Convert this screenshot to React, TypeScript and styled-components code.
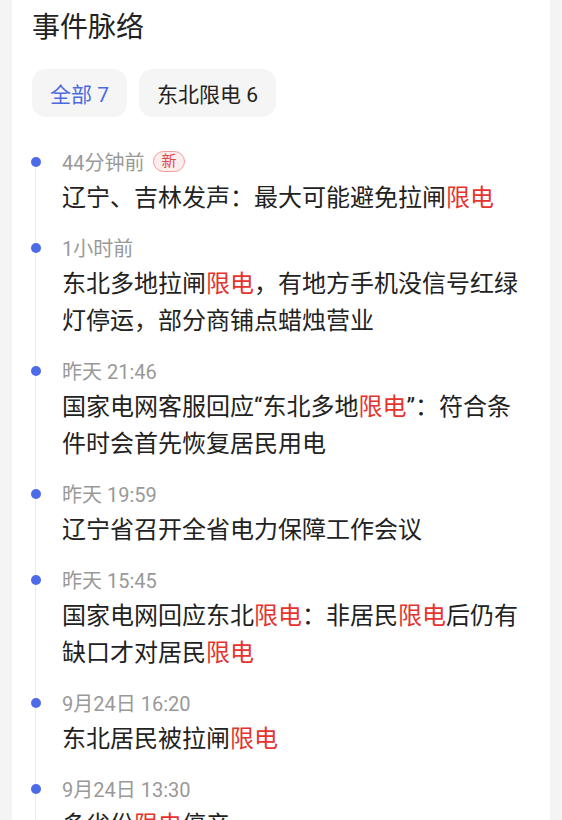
import styled, { createGlobalStyle } from "styled-components";

const GlobalStyle = createGlobalStyle`
  body {
    margin: 0;
    background: #f4f4f4;
    font-family: Roboto, "Noto Sans CJK SC", sans-serif;
  }
`;

const Card = styled.section`
  margin: 0 12px;
  background: #fff;
  padding: 8px 20px 0 20px;
  min-height: 820px;
`;

const Title = styled.h2`
  margin: 0;
  font-size: 28px;
  line-height: 40px;
  font-weight: 400;
  color: #222;
`;

const Tabs = styled.div`
  display: flex;
  gap: 12px;
  margin-top: 21px;
`;

const Tab = styled.button<{ $active?: boolean }>`
  height: 48px;
  padding: 0 18px;
  border: none;
  border-radius: 14px;
  background: #f5f5f5;
  font-family: inherit;
  font-size: 21px;
  color: ${(p) => (p.$active ? "#4d6be0" : "#222")};
`;

const Timeline = styled.ul`
  list-style: none;
  margin: 28px 0 0;
  padding: 0;
`;

const Item = styled.li`
  position: relative;
  padding: 0 0 14px 30px;

  &::before {
    content: "";
    position: absolute;
    left: 3px;
    top: 0;
    bottom: 0;
    width: 1px;
    background: #ececec;
  }

  &:first-child::before {
    top: 16px;
  }
`;

const Dot = styled.span`
  position: absolute;
  left: -1px;
  top: 12px;
  width: 10px;
  height: 10px;
  border-radius: 50%;
  background: #4d6be8;
`;

const Time = styled.div`
  display: flex;
  align-items: center;
  height: 33px;
  margin-bottom: 2px;
  font-size: 20px;
  color: #999;
`;

const NewBadge = styled.span`
  margin-left: 9px;
  height: 19px;
  padding: 0 7px;
  border: 1px solid #f09a9a;
  border-radius: 11px;
  background: #fdeeee;
  color: #e24a4a;
  font-size: 15px;
  line-height: 19px;
`;

const Headline = styled.div`
  font-size: 24px;
  line-height: 37px;
  color: #222;
`;

const Hl = styled.span`
  color: #e5332e;
`;

type Event = { time: string; isNew?: boolean; parts: string[] };

const events: Event[] = [
  { time: "44分钟前", isNew: true, parts: ["辽宁、吉林发声：最大可能避免拉闸", "限电"] },
  { time: "1小时前", parts: ["东北多地拉闸", "限电", "，有地方手机没信号红绿灯停运，部分商铺点蜡烛营业"] },
  { time: "昨天 21:46", parts: ["国家电网客服回应“东北多地", "限电", "”：符合条件时会首先恢复居民用电"] },
  { time: "昨天 19:59", parts: ["辽宁省召开全省电力保障工作会议"] },
  { time: "昨天 15:45", parts: ["国家电网回应东北", "限电", "：非居民", "限电", "后仍有缺口才对居民", "限电"] },
  { time: "9月24日 16:20", parts: ["东北居民被拉闸", "限电"] },
  { time: "9月24日 13:30", parts: ["多省份", "限电", "停产"] },
];

export default function App() {
  return (
    <>
      <GlobalStyle />
      <Card>
        <Title>事件脉络</Title>
        <Tabs>
          <Tab $active>全部 7</Tab>
          <Tab>东北限电 6</Tab>
        </Tabs>
        <Timeline>
          {events.map((e) => (
            <Item key={e.time}>
              <Dot />
              <Time>
                {e.time}
                {e.isNew && <NewBadge>新</NewBadge>}
              </Time>
              <Headline>
                {e.parts.map((p, i) => (i % 2 === 1 ? <Hl key={i}>{p}</Hl> : <span key={i}>{p}</span>))}
              </Headline>
            </Item>
          ))}
        </Timeline>
      </Card>
    </>
  );
}
